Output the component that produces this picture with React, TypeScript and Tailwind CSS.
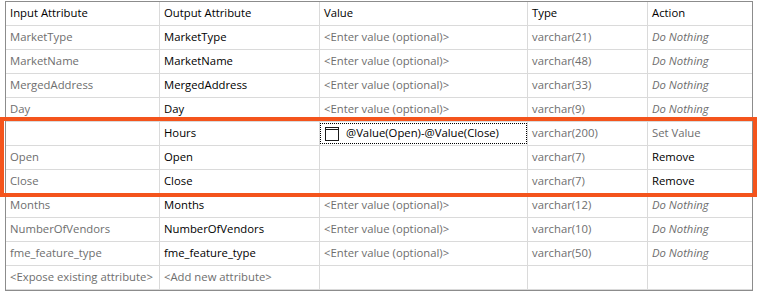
import React from "react";

type Row = {
  input: string;
  output: string;
  value?: string;
  type: string;
  action: string;
};

const rows: Row[] = [
  { input: "MarketType", output: "MarketType", type: "varchar(21)", action: "Do Nothing" },
  { input: "MarketName", output: "MarketName", type: "varchar(48)", action: "Do Nothing" },
  { input: "MergedAddress", output: "MergedAddress", type: "varchar(33)", action: "Do Nothing" },
  { input: "Day", output: "Day", type: "varchar(9)", action: "Do Nothing" },
  { input: "", output: "Hours", value: "@Value(Open)-@Value(Close)", type: "varchar(200)", action: "Set Value" },
  { input: "Open", output: "Open", value: "", type: "varchar(7)", action: "Remove" },
  { input: "Close", output: "Close", value: "", type: "varchar(7)", action: "Remove" },
  { input: "Months", output: "Months", type: "varchar(12)", action: "Do Nothing" },
  { input: "NumberOfVendors", output: "NumberOfVendors", type: "varchar(10)", action: "Do Nothing" },
  { input: "fme_feature_type", output: "fme_feature_type", type: "varchar(50)", action: "Do Nothing" },
];

const cell = "h-[24px] flex items-center px-[4px] border-b border-[#dadada] whitespace-nowrap overflow-hidden";

function ValueIcon() {
  return (
    <svg width="14" height="14" viewBox="0 0 14 14" className="shrink-0">
      <rect x="0.5" y="0.5" width="13" height="13" fill="none" stroke="#1a1a1a" />
      <line x1="1" y1="2.5" x2="13" y2="2.5" stroke="#1a1a1a" />
    </svg>
  );
}

function actionClass(action: string) {
  if (action === "Do Nothing") return "italic text-[#6e6e6e]";
  if (action === "Set Value") return "text-[#6e6e6e]";
  return "text-black";
}

export default function App() {
  return (
    <div className="relative w-[757px] h-[291px] bg-white pt-[1px] pl-[5px] font-['Open_Sans',sans-serif] text-[11.3px]">
      <div className="w-[748px] border border-[#8c8c8c] grid grid-cols-[154px_160px_208px_120px_104px]">
        {/* header */}
        <div className={`${cell} border-r text-black`}>Input Attribute</div>
        <div className={`${cell} border-r text-black`}>Output Attribute</div>
        <div className={`${cell} border-r text-black`}>Value</div>
        <div className={`${cell} border-r text-black`}>Type</div>
        <div className={`${cell} text-black`}>Action</div>

        {rows.map((r, i) => (
          <React.Fragment key={i}>
            <div className={`${cell} border-r text-[#6e6e6e]`}>{r.input}</div>
            <div className={`${cell} border-r text-black`}>{r.output}</div>
            {r.value === undefined ? (
              <div className={`${cell} border-r text-[#6e6e6e]`}>&lt;Enter value (optional)&gt;</div>
            ) : r.value ? (
              <div className="h-[24px] border-b border-r border-[#dadada] p-0">
                <div className="h-[21px] mt-[1px] flex items-center gap-[7px] pl-[4px] border border-dotted border-black text-black">
                  <ValueIcon />
                  <span>{r.value}</span>
                </div>
              </div>
            ) : (
              <div className={`${cell} border-r`} />
            )}
            <div className={`${cell} border-r text-[#6e6e6e]`}>{r.type}</div>
            <div className={`${cell} ${actionClass(r.action)}`}>{r.action}</div>
          </React.Fragment>
        ))}

        {/* trailing row for new entries */}
        <div className={`${cell} border-r text-[#6e6e6e]`}>&lt;Expose existing attribute&gt;</div>
        <div className={`${cell} border-r text-[#6e6e6e]`}>&lt;Add new attribute&gt;</div>
        <div className={`${cell} border-r`} />
        <div className={`${cell} border-r`} />
        <div className={`${cell}`} />
      </div>

      {/* highlight around the edited rows */}
      <div className="absolute left-0 top-[117px] w-[757px] h-[80px] border-[4px] border-[#f4541c] pointer-events-none" />
    </div>
  );
}
